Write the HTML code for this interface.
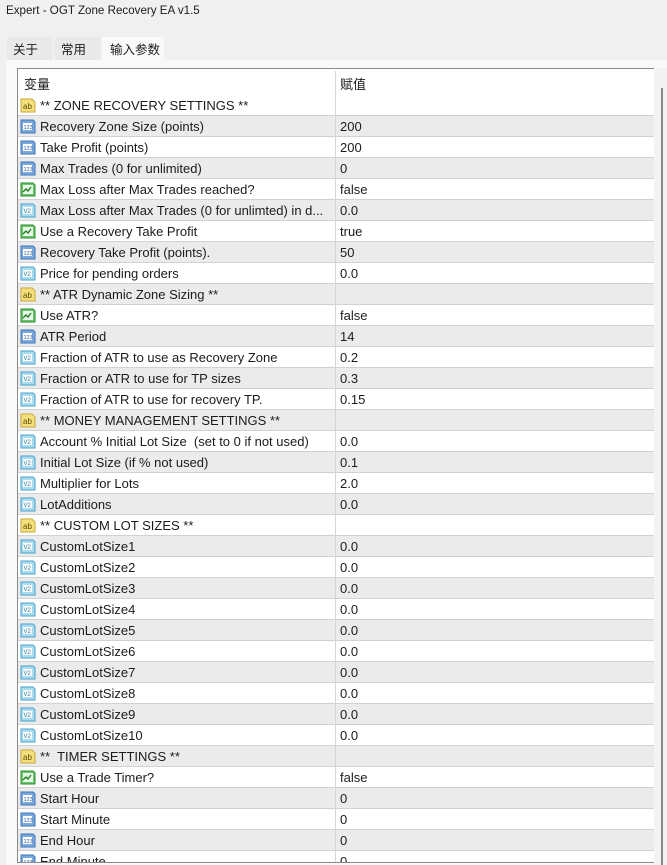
<!DOCTYPE html>
<html><head><meta charset="utf-8"><style>
*{margin:0;padding:0;box-sizing:border-box}
body{width:667px;height:865px;overflow:hidden;background:#f0f0f0;font-family:"Liberation Sans","Noto Sans CJK SC",sans-serif;font-size:13px;color:#1b1b1b;position:relative}
.title{position:absolute;left:6px;top:4px;font-size:11.6px}
.tab{position:absolute;top:37px;height:23px;background:#e9e9e9;padding:2px 0 0 6px;font-size:12.5px}
.tab.a{background:#f9f9f9;padding-left:8px}
.panel{position:absolute;left:6px;top:60px;width:661px;height:805px;background:#f9f9f9}
.tbl{position:absolute;left:17px;top:68px;width:637px;height:795px;background:#fff;border:1px solid #8a8a8a;border-right:none;overflow:hidden}
.hdr{position:absolute;left:0;top:0;width:636px;height:26px}
.hdr span{position:absolute;top:5px}
.vline{position:absolute;left:317px;top:2px;width:1px;height:800px;background:#d6d6d6}
.r{position:absolute;left:0;width:636px;height:21px;border-bottom:1px solid #d2d2d2}
.r.g{background:#ebebeb}
.r .n{position:absolute;left:22px;top:3px;white-space:pre}
.r .v{position:absolute;left:322px;top:3px}
.r svg{position:absolute;left:2px;top:2px}
.sb{position:absolute;left:654px;top:68px;width:13px;height:797px;background:#f3f3f3}
.th{position:absolute;left:661px;top:88px;width:2px;height:777px;background:#8a8a8a}
</style></head><body>
<div class="title">Expert - OGT Zone Recovery EA v1.5</div>
<div class="tab" style="left:7px;width:45px">关于</div>
<div class="tab" style="left:55px;width:45px">常用</div>
<div class="tab a" style="left:102px;width:62px">输入参数</div>
<div class="panel"></div>
<div class="tbl">
<div class="hdr"><span style="left:6px">变量</span><span style="left:322px">赋值</span></div>
<div id="rows"></div>
<div class="vline"></div>
</div>
<div class="sb"></div><div class="th"></div>
<svg width="0" height="0" style="position:absolute"><defs>
<g id="ab"><path d="M1 2h11l3 3v10H1z" fill="#f4e07a" stroke="#c8a93a"/><text x="3" y="12" font-size="8" font-family="Liberation Sans" fill="#5a4a00">ab</text></g>
<g id="n"><path d="M1 2h12l2 2v11H1z" fill="#7aa8dc" stroke="#3f73b4"/><rect x="3" y="5" width="9" height="7" fill="#fff"/><text x="3.5" y="11" font-size="5.5" font-family="Liberation Sans" fill="#2a5a9a">123</text></g>
<g id="d"><path d="M1 2h12l2 2v11H1z" fill="#a8dcf0" stroke="#4aa0c8"/><rect x="3" y="5" width="9" height="7" fill="#fff"/><text x="3.5" y="11" font-size="6" font-family="Liberation Sans" fill="#2a7aa0">V2</text></g>
<g id="b"><path d="M1 2h12l2 2v11H1z" fill="#6cc86c" stroke="#2e8a2e"/><rect x="3" y="4" width="10" height="9" fill="#e8f8e8"/><path d="M3 11l3-3 2 2 3-4" stroke="#1a7a1a" stroke-width="1.3" fill="none"/></g>
</defs></svg>
<script>
var d=[["ab","** ZONE RECOVERY SETTINGS **",""],["n","Recovery Zone Size (points)","200"],["n","Take Profit (points)","200"],["n","Max Trades (0 for unlimited)","0"],["b","Max Loss after Max Trades reached?","false"],["d","Max Loss after Max Trades (0 for unlimted) in d...","0.0"],["b","Use a Recovery Take Profit","true"],["n","Recovery Take Profit (points).","50"],["d","Price for pending orders","0.0"],["ab","** ATR Dynamic Zone Sizing **",""],["b","Use ATR?","false"],["n","ATR Period","14"],["d","Fraction of ATR to use as Recovery Zone","0.2"],["d","Fraction or ATR to use for TP sizes","0.3"],["d","Fraction of ATR to use for recovery TP.","0.15"],["ab","** MONEY MANAGEMENT SETTINGS **",""],["d","Account % Initial Lot Size  (set to 0 if not used)","0.0"],["d","Initial Lot Size (if % not used)","0.1"],["d","Multiplier for Lots","2.0"],["d","LotAdditions","0.0"],["ab","** CUSTOM LOT SIZES **",""]];
for(var i=1;i<=10;i++)d.push(["d","CustomLotSize"+i,"0.0"]);
d=d.concat([["ab","**  TIMER SETTINGS **",""],["b","Use a Trade Timer?","false"],["n","Start Hour","0"],["n","Start Minute","0"],["n","End Hour","0"],["n","End Minute","0"]]);
var h="";d.forEach(function(r,i){h+='<div class="r'+(i%2?' g':'')+'" style="top:'+(26+i*21)+'px"><svg width="17" height="17"><use href="#'+r[0]+'"/></svg><span class="n">'+r[1]+'</span><span class="v">'+r[2]+'</span></div>';});
document.getElementById("rows").innerHTML=h;
</script>
</body></html>
